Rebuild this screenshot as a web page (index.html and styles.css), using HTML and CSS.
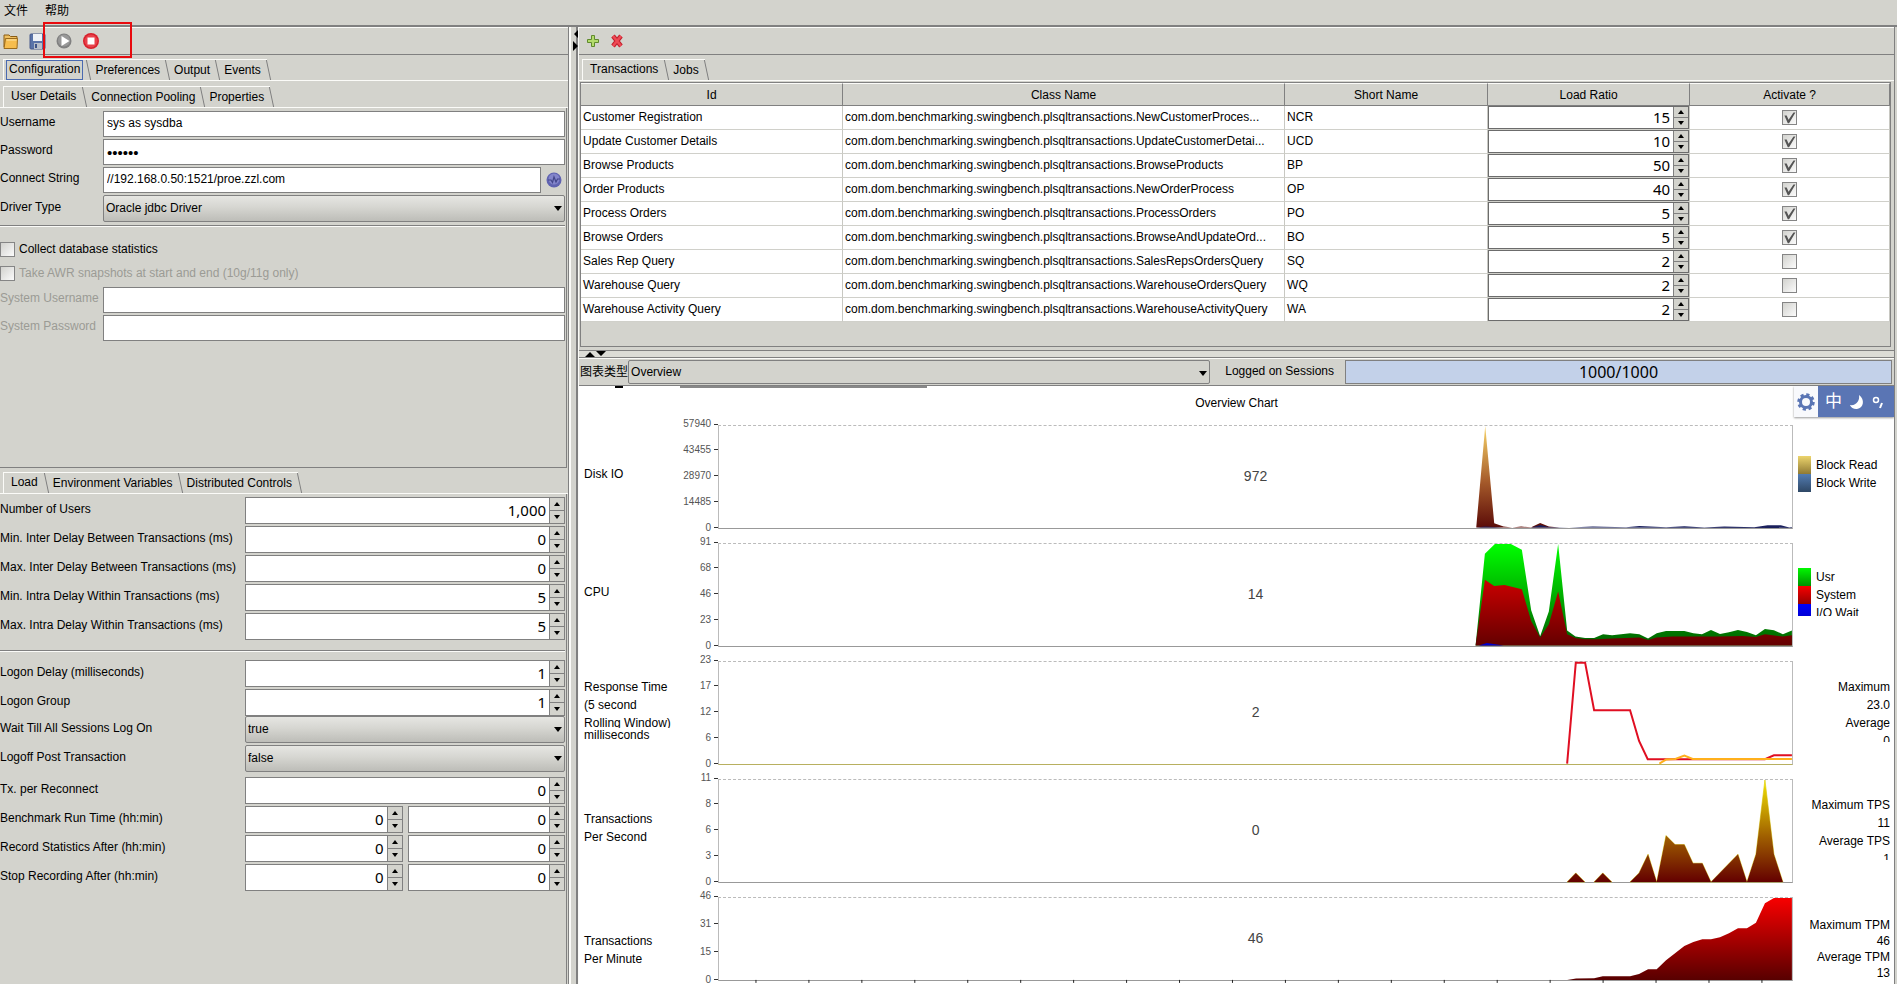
FILE: index.html
```html
<!DOCTYPE html>
<html lang="zh-CN">
<head>
<meta charset="utf-8">
<title>Swingbench</title>
<link rel="stylesheet" href="styles.css">
</head>
<body>
<nav class="menubar">
  <button class="menu">文件</button>
  <button class="menu">帮助</button>
</nav>
<main class="split">
  <section class="left">
    <div class="toolbar">
      <button class="tool" aria-label="Open"><svg width="18" height="18" viewBox="0 0 18 18"><path d="M3 15V3h5l1.500 1.500H16V7" fill="#f0c060" stroke="#8a5c14"/><path d="M3 16.500 4.500 6.500h12L16 16.500z" fill="#f6bd4e" stroke="#9a6a1c"/><path d="M5.500 8h10" stroke="#fde5a8"/></svg></button>
      <button class="tool" aria-label="Save"><svg width="18" height="18" viewBox="0 0 18 18"><rect x="2" y="2" width="15" height="15" rx="1" fill="#5a73a8" stroke="#46598a"/><rect x="5" y="2" width="9" height="7" fill="#eef1f6"/><rect x="6" y="11" width="8" height="6" fill="#b8bec8"/><rect x="7" y="12" width="2" height="4" fill="#3f5488"/></svg></button>
      <button class="tool" aria-label="Start"><svg width="18" height="18" viewBox="0 0 18 18"><circle cx="9" cy="9" r="7.500" fill="#808080"/><circle cx="9" cy="8.500" r="6" fill="#989898"/><path d="M6.500 4v10l8-5z" fill="#fff"/></svg></button>
      <button class="tool" aria-label="Stop"><svg width="18" height="18" viewBox="0 0 18 18"><circle cx="9" cy="9" r="8" fill="#d8202c"/><circle cx="9" cy="9" r="6.500" fill="#e8414b"/><rect x="5.500" y="5.500" width="7" height="7" fill="#fff"/></svg></button>
    </div>
    <div class="mark"></div>
    <div class="tabs outer" role="tablist">
      <button class="tab focus" role="tab" aria-selected="true"><span>Configuration</span></button><button class="tab" role="tab">Preferences</button><button class="tab" role="tab">Output</button><button class="tab" role="tab">Events</button>
    </div>
    <div class="frame">
      <div class="tabs" role="tablist">
        <button class="tab on" role="tab" aria-selected="true">User Details</button><button class="tab" role="tab">Connection Pooling</button><button class="tab" role="tab">Properties</button>
      </div>
      <form class="panel details">
        <div class="field"><label for="user">Username</label><input id="user" type="text" value="sys as sysdba"></div>
        <div class="field"><label for="pass">Password</label><input id="pass" type="password" value="secret"></div>
        <div class="field"><label for="conn">Connect String</label><input id="conn" type="text" value="//192.168.0.50:1521/proe.zzl.com"><button type="button" class="ping" aria-label="Test connection"><svg width="16" height="16" viewBox="0 0 16 16"><circle cx="8" cy="8" r="7.500" fill="#5f62b0"/><circle cx="8" cy="7" r="5.500" fill="#8385cb"/><path d="M2 8h3l1.500 2.500L8 5l2 5 1.500-3H14" fill="none" stroke="#42458a" stroke-width="1.200"/></svg></button></div>
        <div class="field"><label for="drv">Driver Type</label><span class="combo"><select id="drv"><option>Oracle jdbc Driver</option></select></span></div>
        <hr>
        <label class="check"><input type="checkbox">Collect database statistics</label>
        <label class="check off"><input type="checkbox" disabled>Take AWR snapshots at start and end (10g/11g only)</label>
        <div class="field off"><label for="sysu">System Username</label><input id="sysu" type="text" disabled></div>
        <div class="field off"><label for="sysp">System Password</label><input id="sysp" type="password" disabled></div>
      </form>
      <div class="tabs load-tabs" role="tablist">
        <button class="tab on" role="tab" aria-selected="true">Load</button><button class="tab" role="tab">Environment Variables</button><button class="tab" role="tab">Distributed Controls</button>
      </div>
      <form class="panel load">
        <div class="group">
          <div class="row"><label for="l1">Number of Users</label><span class="spinner"><input id="l1" type="text" value="1,000"><span class="arrows"><button type="button" class="up" aria-label="Increase"></button><button type="button" class="down" aria-label="Decrease"></button></span></span></div>
          <div class="row"><label for="l2">Min. Inter Delay Between Transactions (ms)</label><span class="spinner"><input id="l2" type="text" value="0"><span class="arrows"><button type="button" class="up" aria-label="Increase"></button><button type="button" class="down" aria-label="Decrease"></button></span></span></div>
          <div class="row"><label for="l3">Max. Inter Delay Between Transactions (ms)</label><span class="spinner"><input id="l3" type="text" value="0"><span class="arrows"><button type="button" class="up" aria-label="Increase"></button><button type="button" class="down" aria-label="Decrease"></button></span></span></div>
          <div class="row"><label for="l4">Min. Intra Delay Within Transactions (ms)</label><span class="spinner"><input id="l4" type="text" value="5"><span class="arrows"><button type="button" class="up" aria-label="Increase"></button><button type="button" class="down" aria-label="Decrease"></button></span></span></div>
          <div class="row"><label for="l5">Max. Intra Delay Within Transactions (ms)</label><span class="spinner"><input id="l5" type="text" value="5"><span class="arrows"><button type="button" class="up" aria-label="Increase"></button><button type="button" class="down" aria-label="Decrease"></button></span></span></div>
        </div>
        <hr>
        <div class="group">
          <div class="row"><label for="l6">Logon Delay (milliseconds)</label><span class="spinner"><input id="l6" type="text" value="1"><span class="arrows"><button type="button" class="up" aria-label="Increase"></button><button type="button" class="down" aria-label="Decrease"></button></span></span></div>
          <div class="row"><label for="l7">Logon Group</label><span class="spinner"><input id="l7" type="text" value="1"><span class="arrows"><button type="button" class="up" aria-label="Increase"></button><button type="button" class="down" aria-label="Decrease"></button></span></span></div>
        </div>
        <div class="group">
          <div class="row"><label for="l8">Wait Till All Sessions Log On</label><span class="combo"><select id="l8"><option>true</option><option>false</option></select></span></div>
          <div class="row"><label for="l9">Logoff Post Transaction</label><span class="combo"><select id="l9"><option>false</option><option>true</option></select></span></div>
        </div>
        <div class="group last">
          <div class="row"><label for="l10">Tx. per Reconnect</label><span class="spinner"><input id="l10" type="text" value="0"><span class="arrows"><button type="button" class="up" aria-label="Increase"></button><button type="button" class="down" aria-label="Decrease"></button></span></span></div>
          <div class="row"><label for="l11">Benchmark Run Time (hh:min)</label><span class="pair"><span class="spinner"><input id="l11" type="text" value="0"><span class="arrows"><button type="button" class="up" aria-label="Increase"></button><button type="button" class="down" aria-label="Decrease"></button></span></span><span class="spinner"><input aria-label="Run time minutes" type="text" value="0"><span class="arrows"><button type="button" class="up" aria-label="Increase"></button><button type="button" class="down" aria-label="Decrease"></button></span></span></span></div>
          <div class="row"><label for="l12">Record Statistics After (hh:min)</label><span class="pair"><span class="spinner"><input id="l12" type="text" value="0"><span class="arrows"><button type="button" class="up" aria-label="Increase"></button><button type="button" class="down" aria-label="Decrease"></button></span></span><span class="spinner"><input aria-label="Record after minutes" type="text" value="0"><span class="arrows"><button type="button" class="up" aria-label="Increase"></button><button type="button" class="down" aria-label="Decrease"></button></span></span></span></div>
          <div class="row"><label for="l13">Stop Recording After (hh:min)</label><span class="pair"><span class="spinner"><input id="l13" type="text" value="0"><span class="arrows"><button type="button" class="up" aria-label="Increase"></button><button type="button" class="down" aria-label="Decrease"></button></span></span><span class="spinner"><input aria-label="Stop after minutes" type="text" value="0"><span class="arrows"><button type="button" class="up" aria-label="Increase"></button><button type="button" class="down" aria-label="Decrease"></button></span></span></span></div>
        </div>
      </form>
    </div>
  </section>

  <div class="divider"><svg width="6" height="24" viewBox="0 0 6 24"><path d="M6 1v10L1 6zM0 13v10l5-5z" fill="#000"/></svg></div>

  <section class="right">
    <div class="upper">
      <div class="toolbar">
        <button class="tool" aria-label="Add"><svg width="18" height="18" viewBox="0 0 18 18"><path d="M7.500 3.500h3V7.500h4v3h-4v4h-3v-4h-4v-3h4z" fill="#b4dc6c" stroke="#5f8a2c"/></svg></button>
        <button class="tool" aria-label="Remove"><svg width="18" height="18" viewBox="0 0 18 18"><path d="m5 4 8 10M13 4 5 14" stroke="#c21f2c" stroke-width="4.500"/><path d="m5 4 8 10M13 4 5 14" stroke="#ee4a55" stroke-width="2.500"/></svg></button>
      </div>
      <div class="tabs" role="tablist">
        <button class="tab on" role="tab" aria-selected="true">Transactions</button><button class="tab" role="tab">Jobs</button>
      </div>
      <div class="scroll">
        <table>
          <colgroup><col class="c1"><col class="c2"><col class="c3"><col class="c4"><col class="c5"></colgroup>
          <thead><tr><th>Id</th><th>Class Name</th><th>Short Name</th><th>Load Ratio</th><th>Activate ?</th></tr></thead>
          <tbody>
            <tr><td>Customer Registration</td><td>com.dom.benchmarking.swingbench.plsqltransactions.NewCustomerProces...</td><td>NCR</td><td class="num"><span class="spinner"><input type="text" aria-label="Load ratio" value="15"><span class="arrows"><button class="up" aria-label="Increase"></button><button class="down" aria-label="Decrease"></button></span></span></td><td class="act"><input type="checkbox" aria-label="Activate" checked></td></tr>
            <tr><td>Update Customer Details</td><td>com.dom.benchmarking.swingbench.plsqltransactions.UpdateCustomerDetai...</td><td>UCD</td><td class="num"><span class="spinner"><input type="text" aria-label="Load ratio" value="10"><span class="arrows"><button class="up" aria-label="Increase"></button><button class="down" aria-label="Decrease"></button></span></span></td><td class="act"><input type="checkbox" aria-label="Activate" checked></td></tr>
            <tr><td>Browse Products</td><td>com.dom.benchmarking.swingbench.plsqltransactions.BrowseProducts</td><td>BP</td><td class="num"><span class="spinner"><input type="text" aria-label="Load ratio" value="50"><span class="arrows"><button class="up" aria-label="Increase"></button><button class="down" aria-label="Decrease"></button></span></span></td><td class="act"><input type="checkbox" aria-label="Activate" checked></td></tr>
            <tr><td>Order Products</td><td>com.dom.benchmarking.swingbench.plsqltransactions.NewOrderProcess</td><td>OP</td><td class="num"><span class="spinner"><input type="text" aria-label="Load ratio" value="40"><span class="arrows"><button class="up" aria-label="Increase"></button><button class="down" aria-label="Decrease"></button></span></span></td><td class="act"><input type="checkbox" aria-label="Activate" checked></td></tr>
            <tr><td>Process Orders</td><td>com.dom.benchmarking.swingbench.plsqltransactions.ProcessOrders</td><td>PO</td><td class="num"><span class="spinner"><input type="text" aria-label="Load ratio" value="5"><span class="arrows"><button class="up" aria-label="Increase"></button><button class="down" aria-label="Decrease"></button></span></span></td><td class="act"><input type="checkbox" aria-label="Activate" checked></td></tr>
            <tr><td>Browse Orders</td><td>com.dom.benchmarking.swingbench.plsqltransactions.BrowseAndUpdateOrd...</td><td>BO</td><td class="num"><span class="spinner"><input type="text" aria-label="Load ratio" value="5"><span class="arrows"><button class="up" aria-label="Increase"></button><button class="down" aria-label="Decrease"></button></span></span></td><td class="act"><input type="checkbox" aria-label="Activate" checked></td></tr>
            <tr><td>Sales Rep Query</td><td>com.dom.benchmarking.swingbench.plsqltransactions.SalesRepsOrdersQuery</td><td>SQ</td><td class="num"><span class="spinner"><input type="text" aria-label="Load ratio" value="2"><span class="arrows"><button class="up" aria-label="Increase"></button><button class="down" aria-label="Decrease"></button></span></span></td><td class="act"><input type="checkbox" aria-label="Activate"></td></tr>
            <tr><td>Warehouse Query</td><td>com.dom.benchmarking.swingbench.plsqltransactions.WarehouseOrdersQuery</td><td>WQ</td><td class="num"><span class="spinner"><input type="text" aria-label="Load ratio" value="2"><span class="arrows"><button class="up" aria-label="Increase"></button><button class="down" aria-label="Decrease"></button></span></span></td><td class="act"><input type="checkbox" aria-label="Activate"></td></tr>
            <tr><td>Warehouse Activity Query</td><td>com.dom.benchmarking.swingbench.plsqltransactions.WarehouseActivityQuery</td><td>WA</td><td class="num"><span class="spinner"><input type="text" aria-label="Load ratio" value="2"><span class="arrows"><button class="up" aria-label="Increase"></button><button class="down" aria-label="Decrease"></button></span></span></td><td class="act"><input type="checkbox" aria-label="Activate"></td></tr>
          </tbody>
        </table>
      </div>
    </div>
    <div class="hdivider"><svg width="24" height="6" viewBox="0 0 24 6"><path d="M1 6h10L6 1zM12 0h10l-5 5z" fill="#000"/></svg></div>
    <div class="chartbar">
      <label for="ctype">图表类型</label>
      <span class="combo flat"><select id="ctype"><option>Overview</option></select></span>
      <span class="sess-label">Logged on Sessions</span>
      <div class="sess" role="progressbar" aria-valuenow="1000" aria-valuemax="1000">1000/1000</div>
    </div>
    <div class="charts">
      <svg class="strip" width="360" height="2" viewBox="0 0 360 2"><path d="M36 1h8" stroke="#000" stroke-width="2"/><path d="M101 1h247" stroke="#888" stroke-width="2"/></svg>
      <h1>Overview Chart</h1>

      <div class="chart">
        <div class="name">Disk IO</div>
        <ol class="ticks"><li>57940</li><li>43455</li><li>28970</li><li>14485</li><li>0</li></ol>
        <div class="plot"><svg preserveAspectRatio="none" viewBox="-2164 255 3222 305">
          <defs><linearGradient id="gd" gradientUnits="userSpaceOnUse" x1="0" y1="255" x2="0" y2="560"><stop offset="0" stop-color="#f8d468"/><stop offset=".55" stop-color="#a55a2a"/><stop offset="1" stop-color="#5c0c08"/></linearGradient></defs>
          <path d="M110 560 137 255 164 547 192 557 218 560 245 557 275 559 302 546 328 557 360 560z" fill="url(#gd)"/>
          <path d="M110 560l27-3 54 3zM275 560l27-8 26 6 60 2zM390 560l70-3 100 2 40-4 80 4 55-3 60 4 60-3 90 2 40-6h40l25 7 8-1v2z" fill="#1a1f5c"/></svg><b>972</b></div>
        <div class="side"><ul class="legend"><li class="read">Block Read</li><li class="write">Block Write</li></ul></div>
      </div>

      <div class="chart">
        <div class="name">CPU</div>
        <ol class="ticks"><li>91</li><li>68</li><li>46</li><li>23</li><li>0</li></ol>
        <div class="plot"><svg preserveAspectRatio="none" viewBox="-2164 609 3222 305">
          <defs><linearGradient id="gg" gradientUnits="userSpaceOnUse" x1="0" y1="609" x2="0" y2="914"><stop offset="0" stop-color="#0f0"/><stop offset="1" stop-color="#006000"/></linearGradient>
          <linearGradient id="gr" gradientUnits="userSpaceOnUse" x1="0" y1="690" x2="0" y2="914"><stop offset="0" stop-color="#d80000"/><stop offset="1" stop-color="#640000"/></linearGradient></defs>
          <path d="M108 914 136 638 166 609H214L247 626 275 808 302 886 328 812 356 609 383 869 408 887 437 891H464L491 880 518 883 572 877 600 880 626 893 652 877 680 870H735L762 877 788 880 815 867 842 879 869 874 896 867 923 873 950 883 977 864 1004 868 1031 880 1058 869V914z" fill="url(#gg)"/>
          <path d="M108 914 136 716 164 735 195 732 247 745 275 840 302 890 328 850 356 752 383 880 410 892 437 895H470L518 893 600 890 626 897 652 890 700 887H815L842 887 910 885 950 888 977 880 1031 887 1058 883V914z" fill="url(#gr)"/>
          <path d="M118 914l24-8 50 8z" fill="#00c"/></svg><b>14</b></div>
        <div class="side"><ul class="legend clipped"><li class="usr">Usr</li><li class="sys">System</li><li class="io">I/O Wait</li></ul></div>
      </div>

      <div class="chart">
        <div class="name"><div class="cut">Response Time<br>(5 second<br>Rolling Window)</div><div class="tight">milliseconds</div></div>
        <ol class="ticks"><li>23</li><li>17</li><li>12</li><li>6</li><li>0</li></ol>
        <div class="plot gold"><svg preserveAspectRatio="none" viewBox="-2164 63 3222 305">
          <path class="line" d="M383 368 409 65H437L464 208H572L599 300 625 355H977L1004 343H1058" stroke="#e00f22"/>
          <path class="line" d="M660 368 680 356 708 354 735 344 760 354H1058" stroke="#ffb01c"/></svg><b>2</b></div>
        <div class="side"><div class="stats">Maximum<br>23.0<br>Average<br>0</div></div>
      </div>

      <div class="chart">
        <div class="name">Transactions<br>Per Second</div>
        <ol class="ticks"><li>11</li><li>8</li><li>6</li><li>3</li><li>0</li></ol>
        <div class="plot"><svg preserveAspectRatio="none" viewBox="-2164 416 3222 306">
          <defs><linearGradient id="gy" gradientUnits="userSpaceOnUse" x1="0" y1="416" x2="0" y2="722"><stop offset="0" stop-color="#f2e400"/><stop offset=".55" stop-color="#a06000"/><stop offset="1" stop-color="#640000"/></linearGradient></defs>
          <path class="peaks" d="M383 722 409 695 436 722zM464 722 490 695 517 722zM572 722 599 695 626 639 652 722 680 583 707 610H735L761 666H789L815 722 896 639 923 722 950 639 977 416 1004 639 1031 722z" fill="url(#gy)"/></svg><b>0</b></div>
        <div class="side"><div class="stats">Maximum TPS<br>11<br>Average TPS<br>1</div></div>
      </div>

      <div class="chart short">
        <div class="name">Transactions<br>Per Minute</div>
        <ol class="ticks"><li>46</li><li>31</li><li>15</li><li>0</li></ol>
        <div class="plot"><svg preserveAspectRatio="none" viewBox="-2164 770 3222 246">
          <defs><linearGradient id="gm" gradientUnits="userSpaceOnUse" x1="0" y1="770" x2="0" y2="1016"><stop offset="0" stop-color="#f80000"/><stop offset="1" stop-color="#580000"/></linearGradient></defs>
          <path d="M383 1016 410 1012 464 1011 490 1005H572L599 998 626 984H652L680 957 708 935 735 914 762 902 789 894H815L842 888 869 876 896 861H923L950 844 977 786 1004 770H1058V1016z" fill="url(#gm)"/>
          <path class="axis" d="M968 1016v9M809 1016v9M650 1016v9M491 1016v9M332 1016v9M173 1016v9M14 1016v9M-145 1016v9M-304 1016v9M-463 1016v9M-622 1016v9M-781 1016v9M-940 1016v9M-1099 1016v9M-1258 1016v9M-1417 1016v9M-1576 1016v9M-1735 1016v9M-1894 1016v9M-2053 1016v9"/></svg><b>46</b></div>
        <div class="side"><div class="stats">Maximum TPM<br>46<br>Average TPM<br>13</div></div>
      </div>

      <div class="ime"><span class="gear"><svg width="18" height="18" viewBox="0 0 18 18"><circle cx="9" cy="9" r="7" fill="none" stroke="#5a75b4" stroke-width="3.500" stroke-dasharray="3 2.500"/><circle cx="9" cy="9" r="5.500" fill="none" stroke="#5a75b4" stroke-width="3"/></svg></span><span>中</span><svg width="16" height="16" viewBox="0 0 16 16"><path d="M10 1c6 4 5 13-2 14-3 .3-6-1-7-4 6 1 10-4 9-10z" fill="#fff"/></svg><svg width="14" height="16" viewBox="0 0 14 16"><circle cx="4" cy="6" r="2.500" fill="none" stroke="#fff" stroke-width="1.500"/><path d="M10 9 8 14" stroke="#fff" stroke-width="2"/></svg></div>
    </div>
  </section>
</main>
</body>
</html>
```

FILE: styles.css
```css
* { box-sizing: border-box; }

:root {
  --face: #d3d3cd;
  --edge: #808080;
  --light: #fbfbf8;
}

body {
  margin: 0;
  height: 100vh;
  display: flex;
  flex-direction: column;
  overflow: hidden;
  background: var(--face);
  color: #000;
  font: 12px/14px "Liberation Sans", "Noto Sans CJK SC", sans-serif;
}

button, input, select { font: inherit; color: inherit; margin: 0; border-radius: 0; }
button { background: none; border: 0; padding: 0; }
ol, ul { list-style: none; margin: 0; padding: 0; }

.menubar {
  display: flex;
  gap: 17px;
  height: 27px;
  padding: 3px 4px 7px;
  border-bottom: 2px solid var(--edge);
  flex: none;
}
.menu { white-space: nowrap; }

.split { flex: 1; min-height: 0; display: grid; grid-template-columns: 30% 9px minmax(0, 1fr); }

/* toolbars */
.toolbar {
  display: flex;
  align-items: center;
  height: 28px;
  border-top: 1px solid var(--light);
  border-bottom: 1px solid var(--edge);
}
.tool { display: flex; }
.left .toolbar { gap: 9px; padding-left: 1px; }
.right .toolbar { gap: 6px; padding-left: 5px; }

.left { position: relative; display: flex; flex-direction: column; min-height: 0; border-right: 1px solid var(--edge); }
.mark { position: absolute; left: 43px; top: -5px; width: 89px; height: 36px; border: 2px solid #e8090d; }

/* tabs */
.tabs { display: flex; height: 22px; padding-left: 3px; border-bottom: 1px solid var(--light); }
.tab {
  position: relative;
  height: 21px;
  padding: 0 6px 1px 8px;
  border-top: 1px solid var(--light);
  white-space: nowrap;
}
.tab::after {
  content: "";
  position: absolute;
  top: 0;
  right: -2px;
  width: 4px;
  height: 20px;
  border-right: 1px solid var(--edge);
  transform: skewX(12deg);
}
.tab.on { border-left: 1px solid var(--light); padding: 0 7px 2px; }
.tab.focus { padding: 0 4px 0 2px; border-left: 1px solid var(--light); }
.tab.focus span { display: block; height: 20px; padding: 1px 2px 0; border: 1px solid #4a6ab0; }
.outer { margin-top: 4px; }

.frame { flex: 1; min-height: 0; display: flex; flex-direction: column; padding-top: 5px; }

/* left forms */
.panel { border-right: 1px solid var(--edge); margin-right: 1px; padding-right: 1px; }
.details { height: 360px; padding-top: 3px; border-bottom: 1px solid var(--edge); flex: none; }
.field { display: grid; grid-template-columns: 103px minmax(0, 1fr) auto; align-items: center; height: 26px; margin-bottom: 2px; }
.field label, .row label { white-space: nowrap; padding-bottom: 4px; }
.field input { height: 26px; width: 100%; padding: 0 3px 2px; border: 1px solid var(--edge); background: #fff; }
.field input[type="password"] { font-size: 15px; padding-bottom: 0; }
.ping { display: flex; padding: 0 3px 0 5px; }
.off, .off label { color: #9b9b95; }

hr { border: 0; border-top: 1px solid var(--edge); border-bottom: 1px solid var(--light); height: 2px; margin: 0; }
.details hr { margin: 4px 0 14px; }

.check { display: flex; align-items: center; gap: 4px; height: 24px; padding-bottom: 8px; }
.check.off { height: 22px; padding-bottom: 6px; }

input[type="checkbox"] {
  appearance: none;
  width: 15px;
  height: 15px;
  flex: none;
  border: 1px solid #858585;
  background: linear-gradient(135deg, #d2d2ce, #fbfbfb);
}
input[type="checkbox"]:checked::after {
  content: "";
  display: block;
  width: 13px;
  height: 13px;
  background: #555;
  clip-path: polygon(10% 35%, 28% 35%, 42% 68%, 80% 12%, 95% 12%, 46% 95%, 36% 95%);
}

.combo { position: relative; display: block; height: 27px; }
.combo select {
  appearance: none;
  width: 100%;
  height: 100%;
  padding: 0 2px 1px;
  border: 1px solid var(--edge);
  border-radius: 2px;
  background: linear-gradient(#e6e6e2, #d6d6d1 45%, #bdbdb8);
}
.combo::after {
  content: "";
  position: absolute;
  right: 3px;
  top: 11px;
  border: 4px solid transparent;
  border-top: 5px solid #000;
  border-bottom: 0;
}
.combo.flat select { background: var(--face); }

.load-tabs { margin-top: 4px; flex: none; }
.load { flex: 1; padding-top: 3px; }
.load hr { margin: 10px 0 8px; }
.group { display: flex; flex-direction: column; gap: 2px; }
.group.last { margin-top: 5px; }
.row { display: grid; grid-template-columns: 245px minmax(0, 1fr); align-items: center; }
.pair { display: grid; grid-template-columns: repeat(2, minmax(0, 1fr)); gap: 5px; }

.spinner { display: flex; height: 27px; border: 1px solid var(--edge); background: #fff; }
.spinner input {
  flex: 1;
  min-width: 0;
  border: 0;
  padding: 0 3px 2px;
  background: none;
  text-align: right;
  font: 15px/20px "Noto Sans", sans-serif;
}
.arrows { display: flex; flex-direction: column; width: 15px; border-left: 1px solid var(--edge); background: var(--face); }
.arrows button { flex: 1; display: flex; align-items: center; justify-content: center; }
.arrows button::before { content: ""; border: 3px solid transparent; }
.up { border-bottom: 1px solid var(--edge); }
.up::before { border-bottom: 4px solid #000 !important; border-top: 0 !important; }
.down::before { border-top: 4px solid #000 !important; border-bottom: 0 !important; }

/* split dividers */
.divider { padding: 1px 0 0 2px; border-left: 2px solid var(--light); border-right: 2px solid var(--edge); }
.divider svg { display: block; }
.hdivider { height: 8px; padding-left: 5px; border-top: 1px solid var(--edge); border-bottom: 1px solid var(--edge); background: #dcdcd6; }
.hdivider svg { display: block; }

/* right side */
.right { min-width: 0; min-height: 0; display: flex; flex-direction: column; margin-right: 2px; border-left: 1px solid var(--light); border-right: 1px solid var(--edge); }
.upper { padding-bottom: 3px; }
.upper .tabs { margin-top: 4px; }
.scroll { height: 265px; margin: 1px 3px 0 1px; border: 1px solid var(--edge); }

table { width: 100%; table-layout: fixed; border-collapse: separate; border-spacing: 0; }
.c1 { width: 262px; } .c2 { width: 442px; } .c3 { width: 203px; } .c4 { width: 202px; } .c5 { width: 200px; }
th { height: 23px; padding: 0; font-weight: normal; border-right: 1px solid var(--edge); border-bottom: 1px solid var(--edge); border-top: 1px solid var(--light); }
td { height: 24px; padding: 0 0 2px 2px; background: #fff; border-right: 1px solid #c8c8c2; border-bottom: 1px solid #d0d0ca; white-space: nowrap; overflow: hidden; }
td.num { padding: 0; }
td.num .spinner { height: 23px; border-color: #6c6c6c; }
td.act { text-align: center; padding: 0; }
td.act input { display: block; margin: 0 auto; }

.chartbar { display: flex; align-items: center; height: 28px; padding: 1px 2px 1px 1px; border-top: 1px solid var(--light); border-bottom: 1px solid var(--edge); }
.chartbar .combo { flex: 1; height: 24px; }
.sess-label { padding: 0 11px 2px 15px; white-space: nowrap; }
.sess { width: 547px; height: 24px; border: 1px solid var(--edge); background: #c3d1e9; text-align: center; font: 16px/22px "Noto Sans", sans-serif; }

/* charts */
.charts { position: relative; flex: 1; min-height: 0; background: #fff; overflow: hidden; }
.strip { display: block; }
h1 { margin: 0; height: 29px; padding: 8px 0 0; font-size: 12px; line-height: 14px; font-weight: normal; text-align: center; }
.chart { display: grid; grid-template-columns: 92px 47px minmax(0, 1fr) 101px; height: 118px; padding: 8px 0; }
.chart.short { height: 98px; }
.name { align-self: center; padding: 0 0 5px 5px; line-height: 18px; white-space: nowrap; }
.cut { height: 50px; overflow: hidden; }
.tight { line-height: 14px; }
.ticks { display: flex; flex-direction: column; justify-content: space-between; margin: -6px 0 -4px; font-size: 10px; line-height: 10px; color: #555; text-align: right; }
.ticks li { display: flex; justify-content: flex-end; align-items: center; gap: 3px; }
.ticks li::after { content: ""; width: 4px; height: 1px; background: #333; }
.plot { position: relative; border: 1px solid #bbb; border-top: 1px dashed #bbb; border-bottom-color: #999; }
.plot.gold { border-bottom-color: #b8b060; }
.plot svg { display: block; width: 100%; height: 100%; overflow: visible; }
.plot b { position: absolute; inset: 0; display: flex; align-items: center; justify-content: center; padding-bottom: 2px; font-weight: normal; font-size: 14px; color: #444; }
.line { fill: none; stroke-width: 2; vector-effect: non-scaling-stroke; }
.peaks { stroke: #d8c800; stroke-width: 2; paint-order: stroke; }
.axis { stroke: #222; stroke-width: 1; vector-effect: non-scaling-stroke; }
.side { align-self: center; padding-bottom: 6px; }
.short .name { align-self: end; padding-bottom: 13px; }
.short .side { align-self: end; padding-bottom: 0; }
.legend { padding-left: 5px; line-height: 18px; }
.legend li { padding-left: 5px; border-left: 13px solid; border-image-slice: 1; white-space: nowrap; }
.clipped { height: 48px; overflow: hidden; }
.read { border-image-source: linear-gradient(#f2da70, #8a7430); }
.write { border-image-source: linear-gradient(#5580b8, #2c4460); }
.usr { border-image-source: linear-gradient(#0f0, #008a00); }
.sys { border-image-source: linear-gradient(#f00, #900000); }
.io { border-image-source: linear-gradient(#00f, #0000c0); }
.stats { height: 64px; overflow: hidden; padding-right: 4px; text-align: right; line-height: 18px; }
.short .stats { line-height: 16px; }

.ime { position: absolute; top: 0; right: 0; display: flex; align-items: center; gap: 7px; height: 31px; padding-right: 8px; background: #5a75b4; color: #fff; font-size: 17px; line-height: 20px; box-shadow: 0 1px 2px #999; }
.gear { display: flex; align-items: center; height: 100%; padding: 0 3px; background: #f8f9fc; }
```
